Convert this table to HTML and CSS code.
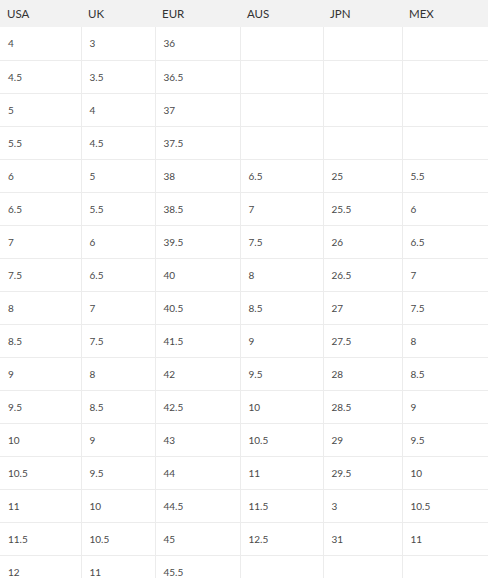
FILE: index.html
```html
<!DOCTYPE html>
<html>
<head>
<meta charset="utf-8">
<link rel="stylesheet" href="styles.css">
</head>
<body>
<table class="size-table">
<colgroup>
<col class="c1"><col class="c2"><col class="c3"><col class="c4"><col class="c5"><col class="c6">
</colgroup>
<thead>
<tr><th>USA</th><th>UK</th><th>EUR</th><th>AUS</th><th>JPN</th><th>MEX</th></tr>
</thead>
<tbody>
<tr><td>4</td><td>3</td><td>36</td><td></td><td></td><td></td></tr>
<tr><td>4.5</td><td>3.5</td><td>36.5</td><td></td><td></td><td></td></tr>
<tr><td>5</td><td>4</td><td>37</td><td></td><td></td><td></td></tr>
<tr><td>5.5</td><td>4.5</td><td>37.5</td><td></td><td></td><td></td></tr>
<tr><td>6</td><td>5</td><td>38</td><td>6.5</td><td>25</td><td>5.5</td></tr>
<tr><td>6.5</td><td>5.5</td><td>38.5</td><td>7</td><td>25.5</td><td>6</td></tr>
<tr><td>7</td><td>6</td><td>39.5</td><td>7.5</td><td>26</td><td>6.5</td></tr>
<tr><td>7.5</td><td>6.5</td><td>40</td><td>8</td><td>26.5</td><td>7</td></tr>
<tr><td>8</td><td>7</td><td>40.5</td><td>8.5</td><td>27</td><td>7.5</td></tr>
<tr><td>8.5</td><td>7.5</td><td>41.5</td><td>9</td><td>27.5</td><td>8</td></tr>
<tr><td>9</td><td>8</td><td>42</td><td>9.5</td><td>28</td><td>8.5</td></tr>
<tr><td>9.5</td><td>8.5</td><td>42.5</td><td>10</td><td>28.5</td><td>9</td></tr>
<tr><td>10</td><td>9</td><td>43</td><td>10.5</td><td>29</td><td>9.5</td></tr>
<tr><td>10.5</td><td>9.5</td><td>44</td><td>11</td><td>29.5</td><td>10</td></tr>
<tr><td>11</td><td>10</td><td>44.5</td><td>11.5</td><td>3</td><td>10.5</td></tr>
<tr><td>11.5</td><td>10.5</td><td>45</td><td>12.5</td><td>31</td><td>11</td></tr>
<tr><td>12</td><td>11</td><td>45.5</td><td></td><td></td><td></td></tr>
</tbody>
</table>
</body>
</html>
```

FILE: styles.css
```css
html, body {
  margin: 0;
  padding: 0;
  background: #ffffff;
}
body {
  font-family: "Lato", "Liberation Sans", sans-serif;
  color: #333333;
}
.size-table {
  width: 488px;
  table-layout: fixed;
  border-collapse: collapse;
  border-spacing: 0;
}
.c1 { width: 81px; }
.c2 { width: 74px; }
.c3 { width: 85px; }
.c4 { width: 83px; }
.c5 { width: 79px; }
.c6 { width: 86px; }
.size-table th {
  background: #f2f2f2;
  height: 27px;
  padding: 0 0 0 7px;
  text-align: left;
  font-weight: 400;
  font-size: 11.5px;
  color: #333333;
  vertical-align: middle;
  box-sizing: border-box;
}
.size-table td {
  height: 33px;
  padding: 0 0 0 8px;
  font-size: 10px;
  font-weight: 400;
  color: #4a4a4a;
  border-bottom: 1px solid #ececec;
  border-left: 1px solid #ececec;
  vertical-align: middle;
  box-sizing: border-box;
}
.size-table td:first-child {
  border-left: none;
}
```
